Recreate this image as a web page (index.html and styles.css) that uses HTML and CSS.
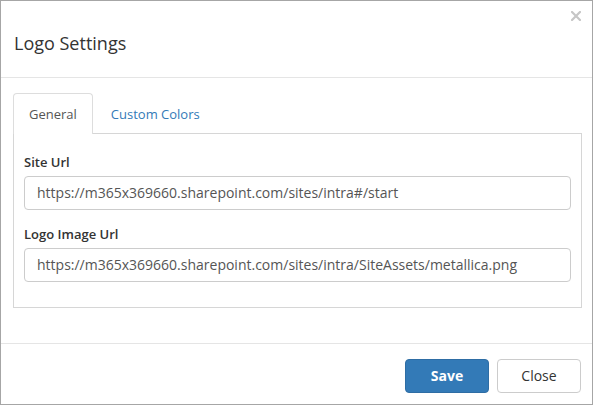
FILE: index.html
```html
<!DOCTYPE html>
<html>
<head>
<meta charset="utf-8">
<link rel="stylesheet" href="styles.css">
</head>
<body>
<div class="modal">
  <div class="modal-header">
    <h4 class="modal-title">Logo Settings</h4>
    <button class="close" aria-label="Close">
      <svg width="10" height="10" viewBox="0 0 10 10"><path d="M1 1L9 9M9 1L1 9" stroke="#c6c6c6" stroke-width="2.2" stroke-linecap="square"/></svg>
    </button>
  </div>
  <div class="modal-body">
    <ul class="nav-tabs">
      <li class="tab active">General</li>
      <li class="tab">Custom Colors</li>
    </ul>
    <div class="tab-pane">
      <div class="form-group">
        <label class="label">Site Url</label>
        <div class="input">https://m365x369660.sharepoint.com/sites/intra#/start</div>
      </div>
      <div class="form-group">
        <label class="label">Logo Image Url</label>
        <div class="input">https://m365x369660.sharepoint.com/sites/intra/SiteAssets/metallica.png</div>
      </div>
    </div>
  </div>
  <div class="modal-footer">
    <button class="btn btn-primary">Save</button>
    <button class="btn btn-default">Close</button>
  </div>
</div>
</body>
</html>
```
FILE: styles.css
```css
* { box-sizing: border-box; }
html, body { margin: 0; padding: 0; background: #fff; }
body { font-family: "Open Sans", "Noto Sans", sans-serif; color: #333; }

.modal {
  width: 593px;
  height: 405px;
  border: 1px solid #a6a6a6;
  display: flex;
  flex-direction: column;
}

.modal-header {
  position: relative;
  height: 77px;
  padding: 29px 13px 0 13px;
  border-bottom: 1px solid #e5e5e5;
}
.modal-title {
  margin: 0;
  font-size: 18px;
  line-height: 26px;
  font-weight: 400;
  color: #333;
}
.close {
  position: absolute;
  top: 10px;
  right: 11px;
  width: 10px;
  height: 10px;
  padding: 0;
  border: 0;
  background: none;
  display: block;
}
.close svg { display: block; }

.modal-body {
  padding: 15px 10px 35px 12px;
  border-bottom: 1px solid #e5e5e5;
}

.nav-tabs {
  list-style: none;
  margin: 0;
  padding: 0;
  display: flex;
  font-size: 13px;
  line-height: 18px;
}
.tab {
  padding: 11px 17px 10px 17px;
  color: #337ab7;
  border: 1px solid transparent;
  border-bottom: 0;
  border-radius: 4px 4px 0 0;
}
.tab.active {
  color: #555;
  border-color: #ddd;
  background: #fff;
  padding: 11px 15px 10px 15px;
  margin-bottom: -1px;
  position: relative;
  z-index: 1;
}

.tab-pane {
  border: 1px solid #d6d6d6;
  padding: 18px 10px 11px 10px;
}
.form-group { margin-bottom: 14px; }
.label {
  display: block;
  font-size: 13px;
  line-height: 20px;
  font-weight: 600;
  margin-bottom: 4px;
  color: #333;
}
.input {
  height: 34px;
  border: 1px solid #ccc;
  border-radius: 4px;
  padding: 6px 12px;
  font-size: 14px;
  line-height: 20px;
  color: #555;
  white-space: nowrap;
  overflow: hidden;
}

.modal-footer {
  flex: 1;
  display: flex;
  justify-content: flex-end;
  align-items: flex-start;
  gap: 8px;
  padding: 15px 11px 0 0;
}
.btn {
  width: 84px;
  height: 34px;
  border-radius: 4px;
  font-family: "Open Sans", "Noto Sans", sans-serif;
  font-size: 14px;
  line-height: 20px;
  padding: 6px 12px;
  border: 1px solid #ccc;
}
.btn-primary {
  background: #337ab7;
  border-color: #2e6da4;
  color: #fff;
  font-weight: 700;
}
.btn-default {
  background: #fff;
  color: #333;
}
```
